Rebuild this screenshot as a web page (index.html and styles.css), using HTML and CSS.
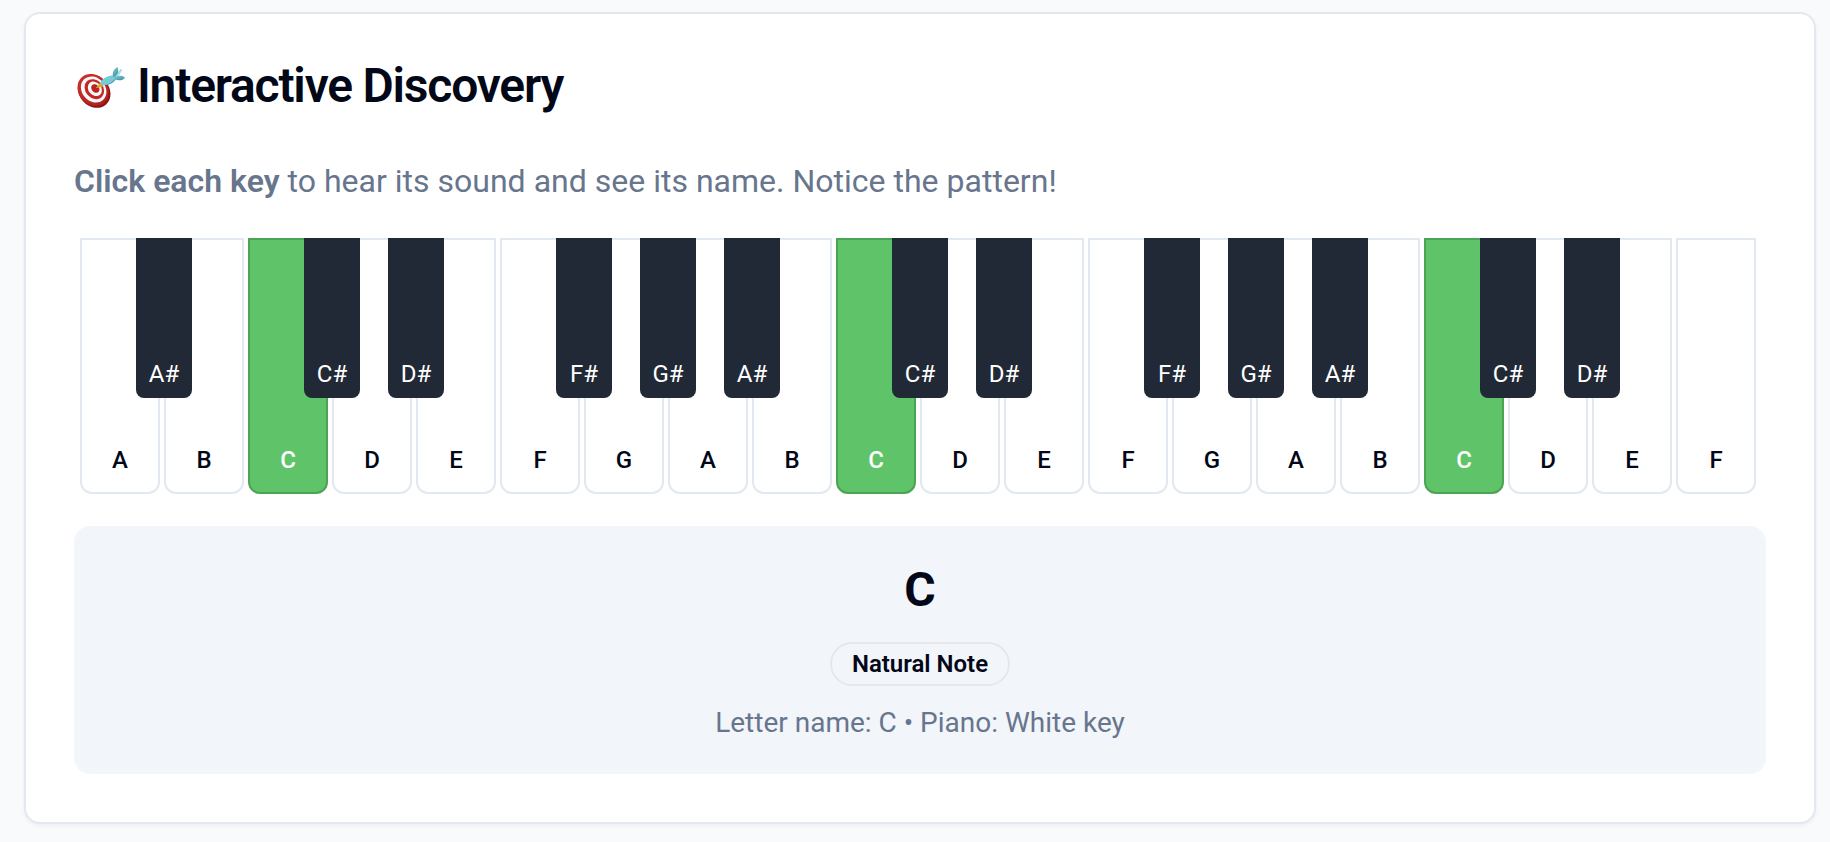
FILE: index.html
```
<!DOCTYPE html>
<html lang="en">
<head>
<meta charset="utf-8">
<title>Interactive Discovery</title>
<link rel="stylesheet" href="styles.css">
</head>
<body>
<main class="card">
  <h1 class="title">
    <svg class="target" viewBox="48 42 150 132" aria-hidden="true">
      <defs>
        <linearGradient id="rim" x1="0" y1="0" x2="0" y2="1">
          <stop offset="0" stop-color="#cb2f2a"/>
          <stop offset="1" stop-color="#b21f1c"/>
        </linearGradient>
        <linearGradient id="fin" x1="0" y1="0" x2="0.6" y2="1">
          <stop offset="0" stop-color="#7fcbd2"/>
          <stop offset="1" stop-color="#4197a3"/>
        </linearGradient>
      </defs>
      <ellipse cx="102.500" cy="123.500" rx="45" ry="53.500" transform="rotate(-42 102.500 123.500)" fill="#861714"/>
      <ellipse cx="99.500" cy="119.500" rx="43.500" ry="51" transform="rotate(-42 99.500 119.500)" fill="url(#rim)"/>
      <ellipse cx="101" cy="118.500" rx="35" ry="42" transform="rotate(-42 101 118.500)" fill="#f9f8f8"/>
      <ellipse cx="103" cy="117.500" rx="26.500" ry="32.500" transform="rotate(-42 103 117.500)" fill="#c02925"/>
      <ellipse cx="104.500" cy="116.500" rx="19" ry="23.500" transform="rotate(-42 104.500 116.500)" fill="#f9f8f8"/>
      <ellipse cx="106" cy="115.500" rx="11" ry="14" transform="rotate(-42 106 115.500)" fill="#b92420"/>
      <path d="M107 114.500 122 97 131 109Z" fill="#e0ab2d"/>
      <path d="M121 98c5-12 19-20 42-22l7 8c-8 13-20 21-39 22-4 0-8-3-10-8Z" fill="#77cbd5"/>
      <path d="M129 106c17-3 28-9 39-23l2 1c-8 13-20 21-39 22Z" fill="#459fac"/>
      <path d="M159 80c-3-12 2-22 13-29 5 10 4 19-3 30Z" fill="url(#fin)"/>
      <path d="M165 81 182 57 187 59 171 85Z" fill="#a2dce1"/>
      <path d="M165 82c12-6 22-6 30 1-6 8-18 10-30 5Z" fill="url(#fin)"/>
    </svg>
    <span>Interactive Discovery</span>
  </h1>
  <p class="lead"><strong>Click each key</strong> to hear its sound and see its name. Notice the pattern!</p>
  <div class="keyboard">
    <div class="key">A<span class="sharp">A#</span></div>
    <div class="key">B</div>
    <div class="key active">C<span class="sharp">C#</span></div>
    <div class="key">D<span class="sharp">D#</span></div>
    <div class="key">E</div>
    <div class="key">F<span class="sharp">F#</span></div>
    <div class="key">G<span class="sharp">G#</span></div>
    <div class="key">A<span class="sharp">A#</span></div>
    <div class="key">B</div>
    <div class="key active">C<span class="sharp">C#</span></div>
    <div class="key">D<span class="sharp">D#</span></div>
    <div class="key">E</div>
    <div class="key">F<span class="sharp">F#</span></div>
    <div class="key">G<span class="sharp">G#</span></div>
    <div class="key">A<span class="sharp">A#</span></div>
    <div class="key">B</div>
    <div class="key active">C<span class="sharp">C#</span></div>
    <div class="key">D<span class="sharp">D#</span></div>
    <div class="key">E</div>
    <div class="key">F</div>
  </div>
  <section class="note">
    <div class="note-name">C</div>
    <div class="badge">Natural Note</div>
    <div class="note-info">Letter name: C • Piano: White key</div>
  </section>
</main>
</body>
</html>
```

FILE: styles.css
```
* {
  box-sizing: border-box;
}

body {
  margin: 0;
  padding: 12px 14px 18px 24px;
  background: #f9fafc;
  color: #020817;
  font-family: Roboto, "Liberation Sans", sans-serif;
}

.card {
  height: 812px;
  padding: 48px;
  border: 2px solid #e2e8f0;
  border-radius: 16px;
  background: #fff;
  box-shadow: 0 2px 4px rgba(0, 0, 0, 0.05);
}

.title {
  display: flex;
  align-items: center;
  gap: 11px;
  height: 48px;
  margin: 0;
  font-size: 48px;
  font-weight: 600;
  line-height: 48px;
  letter-spacing: -1.2px;
  white-space: nowrap;
}

.target {
  width: 50px;
  height: 44px;
  margin-left: 2px;
}

.lead {
  margin: 47px 0 0;
  color: #67758d;
  font-size: 32px;
  line-height: 48px;
  letter-spacing: 0.01px;
}

.lead strong {
  font-weight: 600;
}

.keyboard {
  display: flex;
  gap: 4px;
  margin-top: 33px;
  padding-left: 6px;
}

.key {
  position: relative;
  display: flex;
  align-items: flex-end;
  justify-content: center;
  width: 80px;
  height: 256px;
  padding-bottom: 16px;
  border: 2px solid #e2e8f0;
  border-radius: 0 0 12px 12px;
  background: #fff;
  font-size: 24px;
  font-weight: 500;
  line-height: 32px;
}

.active {
  border-color: #4ba354;
  background: #5fc469;
  color: #fff;
}

.sharp {
  position: absolute;
  z-index: 1;
  top: -2px;
  left: 54px;
  display: flex;
  align-items: flex-end;
  justify-content: center;
  width: 56px;
  height: 160px;
  padding-bottom: 8px;
  border-radius: 0 0 8px 8px;
  background: #212936;
  color: #fff;
  font-weight: 400;
}

.note {
  display: flex;
  flex-direction: column;
  align-items: center;
  height: 248px;
  margin-top: 32px;
  padding: 32px;
  border-radius: 16px;
  background: #f2f5fa;
}

.note-name {
  font-size: 48px;
  font-weight: 700;
  line-height: 64px;
}

.badge {
  height: 44px;
  margin-top: 20px;
  padding: 4px 20px;
  border: 2px solid #e5e7eb;
  border-radius: 22px;
  font-size: 24px;
  font-weight: 600;
  line-height: 32px;
}

.note-info {
  margin-top: 17px;
  color: #67758d;
  font-size: 28px;
  line-height: 40px;
}
```
